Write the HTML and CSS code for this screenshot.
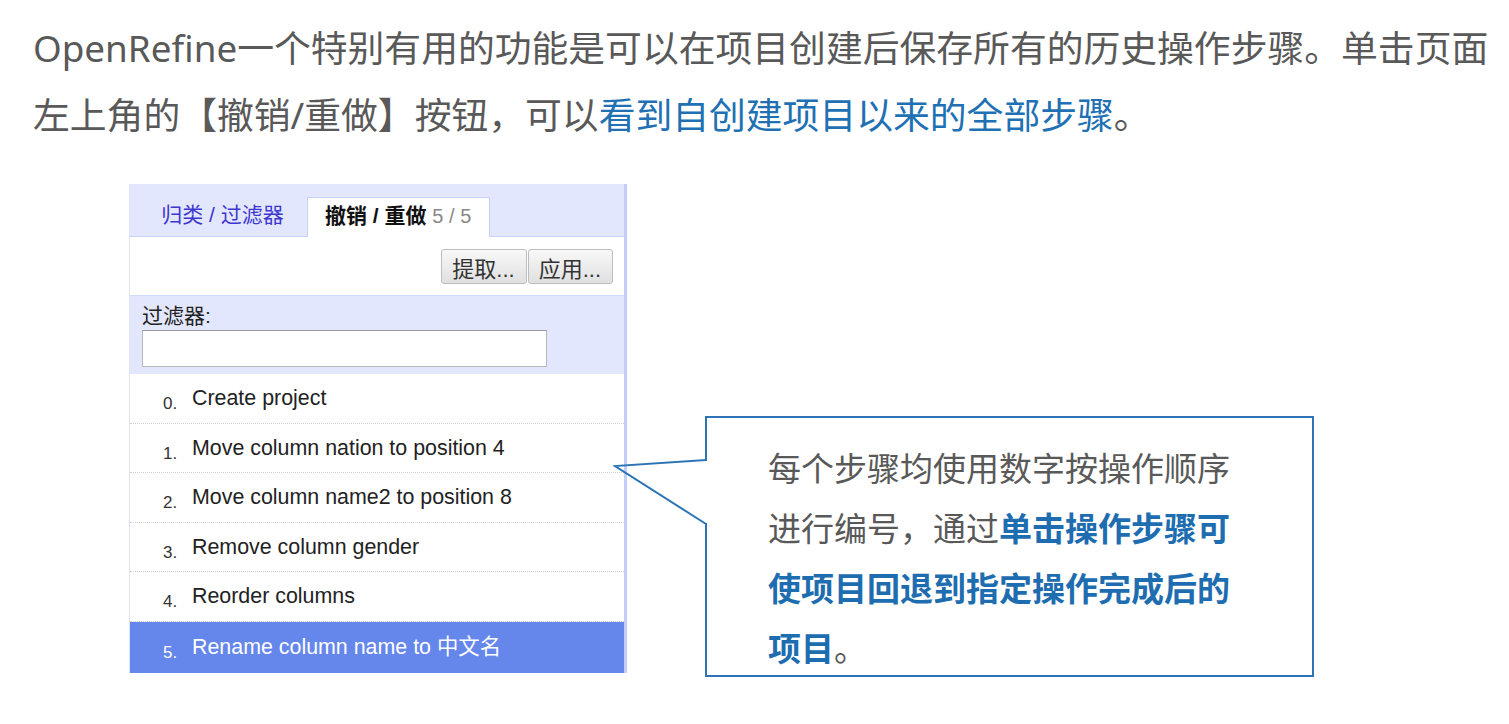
FILE: index.html
```html
<!DOCTYPE html>
<html lang="zh-CN">
<head>
  <meta charset="UTF-8">
  <meta name="viewport" content="width=device-width, initial-scale=1.0">
  <title>OpenRefine 撤销/重做</title>
  <link rel="stylesheet" href="styles.css">
</head>
<body>
  <p class="intro">OpenRefine一个特别有用的功能是可以在项目创建后保存所有的历史操作步骤。单击页面左上角的【撤销/重做】按钮，可以<span class="link">看到自创建项目以来的全部步骤</span>。</p>

  <div class="figure">
    <div class="panel">
      <div class="tabs">
        <div class="tab">归类 / 过滤器</div>
        <div class="tab active"><b>撤销 / 重做</b> <span class="count">5 / 5</span></div>
      </div>
      <div class="toolbar">
        <button class="btn">提取...</button><button class="btn">应用...</button>
      </div>
      <div class="filter">
        <div class="filter-label">过滤器:</div>
        <input class="filter-input" type="text">
      </div>
      <ul class="history">
        <li class="step"><span class="num">0.</span>Create project</li>
        <li class="step"><span class="num">1.</span>Move column nation to position 4</li>
        <li class="step"><span class="num">2.</span>Move column name2 to position 8</li>
        <li class="step"><span class="num">3.</span>Remove column gender</li>
        <li class="step"><span class="num">4.</span>Reorder columns</li>
        <li class="step current"><span class="num">5.</span>Rename column name to 中文名</li>
      </ul>
    </div>

    <div class="callout">
      <svg class="pointer" width="95" height="75" viewBox="0 0 95 75">
        <rect x="91" y="6" width="5" height="62" fill="#fff"/>
        <polyline points="93,5 2,11 93,69" fill="none" stroke="#2e74b5" stroke-width="2"/>
      </svg>
      <p class="callout-text">每个步骤均使用数字按操作顺序进行编号，通过<strong>单击操作步骤可使项目回退到指定操作完成后的项目</strong>。</p>
    </div>
  </div>
</body>
</html>
```

FILE: styles.css
```css
body {
  margin: 0;
  background: #fff;
  font-family: "Noto Sans", "Noto Sans CJK SC", sans-serif;
}
.intro {
  margin: 0;
  padding: 15px 10px 0 33px;
  font-size: 36.8px;
  line-height: 67px;
  color: #595959;
}
.link {
  color: #2170b3;
}
.figure {
  display: flex;
  align-items: flex-start;
  margin-top: 35px;
  padding-left: 129px;
}
.panel {
  width: 498px;
  box-sizing: border-box;
  border-left: 1px solid #dfe4f4;
  border-right: 3px solid #c3cefa;
  background: #fff;
  font-family: "Liberation Sans", "Noto Sans CJK SC", sans-serif;
  color: #222;
}
.tabs {
  display: flex;
  align-items: flex-end;
  height: 52px;
  background: #e2e7fd;
  border-bottom: 1px solid #c8d2f8;
}
.tab {
  width: 177px;
  height: 40px;
  box-sizing: border-box;
  padding-left: 8px;
  text-align: center;
  font-size: 21px;
  line-height: 38px;
  color: #3d36cf;
}
.tab.active {
  width: 183px;
  margin-bottom: -1px;
  padding: 0 0 0 17px;
  text-align: left;
  line-height: 36px;
  background: #fff;
  border: 1px solid #c8d2f8;
  border-bottom: none;
  color: #111;
}
.count {
  color: #888;
  font-size: 20px;
}
.toolbar {
  display: flex;
  justify-content: flex-end;
  height: 59px;
  box-sizing: border-box;
  padding: 12px 11px 0 0;
  border-bottom: 1px solid #d2dafa;
}
.btn {
  height: 35px;
  padding: 0 11px 0 10px;
  font-family: "Liberation Sans", "Noto Sans CJK SC", sans-serif;
  font-size: 22px;
  color: #333;
  background: linear-gradient(#f8f8f8, #e0e0e0);
  border: 1px solid #bdbdbd;
  border-radius: 3px;
}
.btn + .btn {
  margin-left: 1px;
}
.filter {
  height: 78px;
  box-sizing: border-box;
  padding: 9px 0 0 12px;
  background: #e2e7fd;
}
.filter-label {
  font-size: 21px;
  line-height: 22px;
  color: #222;
}
.filter-input {
  display: block;
  width: 405px;
  height: 37px;
  box-sizing: border-box;
  margin: 3px 0 0;
  border: 1px solid #b8b8b8;
  border-top-color: #999;
  background: #fff;
}
.history {
  list-style: none;
  margin: 0;
  padding: 0;
}
.step {
  height: 48.5px;
  padding-left: 33px;
  font-size: 21.4px;
  line-height: 48px;
  color: #222;
  border-bottom: 1px dotted #cfcfcf;
  white-space: nowrap;
}
.num {
  display: inline-block;
  width: 29px;
  font-size: 17px;
  vertical-align: -4px;
  color: #333;
}
.step.current {
  height: 51.5px;
  line-height: 50px;
  background: #6586ea;
  color: #fff;
  border-bottom: none;
}
.step.current .num {
  color: #fff;
}
.callout {
  position: relative;
  width: 609px;
  height: 261px;
  box-sizing: border-box;
  margin: 232px 0 0 78px;
  padding: 19px 0 0 61px;
  border: 2px solid #2e74b5;
  background: #fff;
}
.pointer {
  position: absolute;
  left: -94px;
  top: 37px;
}
.callout-text {
  width: 470px;
  margin: 0;
  font-family: "Noto Sans CJK SC", sans-serif;
  font-size: 33px;
  line-height: 60px;
  color: #595959;
}
.callout-text strong {
  color: #1d6db0;
  font-weight: 700;
}
```
